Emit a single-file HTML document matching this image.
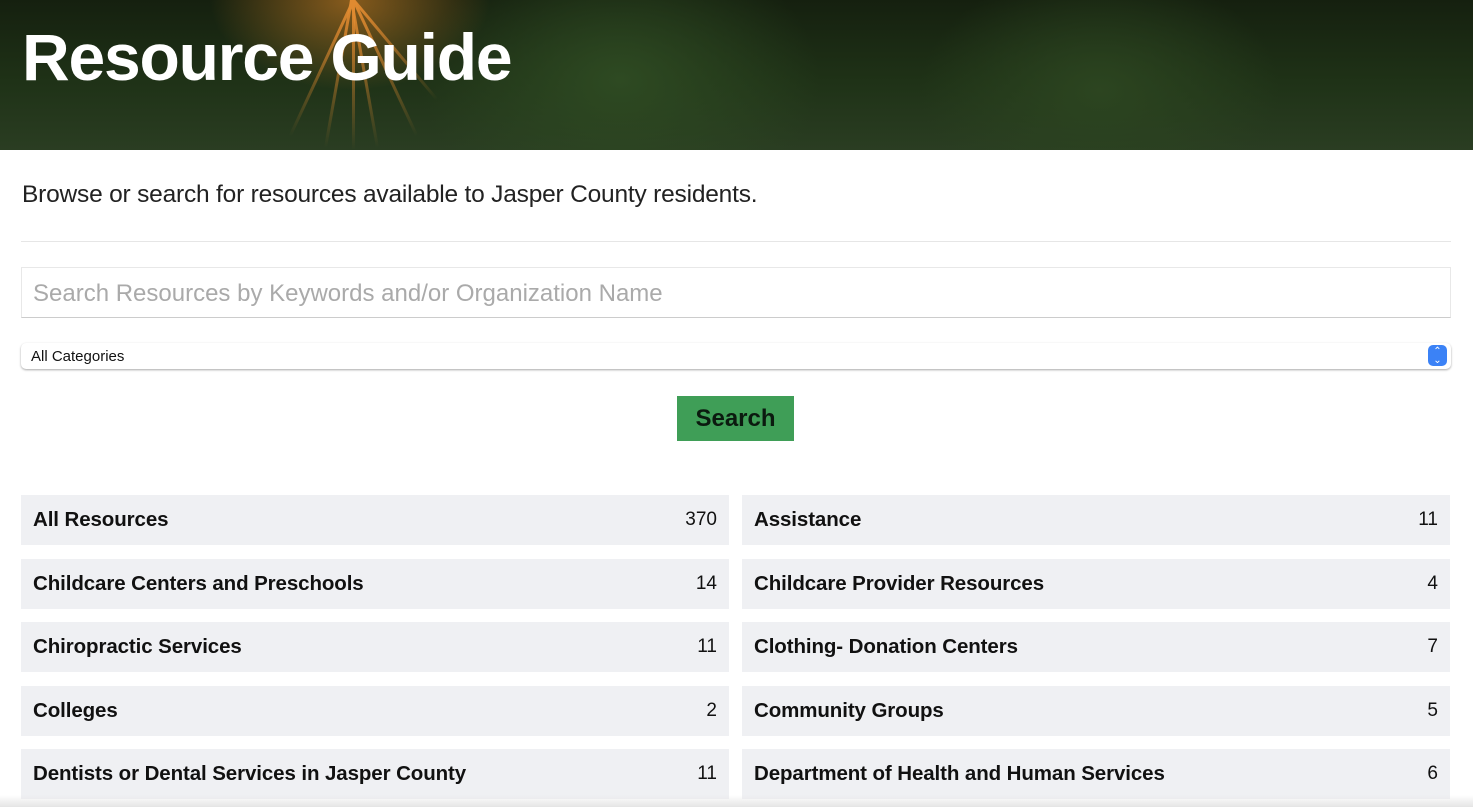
<!DOCTYPE html>
<html><head><style>
body{margin:0;width:1473px;height:807px;overflow:hidden;background:#fff;font-family:"Liberation Sans",sans-serif;position:relative}
.hero{position:absolute;left:0;top:0;width:1473px;height:150px;background:
radial-gradient(ellipse 140px 90px at 350px 0px,rgba(230,140,40,.55),transparent),
radial-gradient(ellipse 200px 140px at 620px 80px,#2e4a22,transparent),
radial-gradient(ellipse 180px 120px at 1100px 90px,#2c4520,transparent),
linear-gradient(180deg,#15200f 0%,#1f3217 55%,#2a3d22 100%);overflow:hidden}
.ray{position:absolute;top:0;width:3px;height:150px;background:linear-gradient(#e08a30,rgba(200,110,30,0));transform-origin:top}
.hero h1{position:absolute;left:22px;top:19px;margin:0;color:#fff;font-size:66px;font-weight:bold;letter-spacing:-1.2px}
.intro{position:absolute;left:22px;top:181px;font-size:24.5px;color:#222;letter-spacing:-.2px}
.hr{position:absolute;left:21px;top:241px;width:1430px;height:1px;background:#e6e6e6}
.input{position:absolute;left:21px;top:267px;height:51px;border:1px solid #e8e8e8;border-bottom-color:#ccc;font-size:24px;color:#aaa;line-height:52px;padding-left:11px;box-sizing:border-box;width:1430px}
.sel{position:absolute;left:21px;top:343px;width:1430px;height:26px;border-radius:5px;box-shadow:0 1px 2px rgba(0,0,0,.35);font-size:15px;line-height:28px;padding-left:10px;box-sizing:border-box;color:#111}
.sel i{position:absolute;right:4px;top:2px;width:19px;height:21px;background:#3b82f6;border-radius:5px;color:#fff;font-style:normal;font-size:10px;line-height:9px;text-align:center;padding-top:2px;box-sizing:border-box}
.btn{position:absolute;left:677px;top:396px;width:117px;height:45px;background:#3f9e57;color:#0b1a0f;font-weight:bold;font-size:24px;text-align:center;line-height:46px}
.row{position:absolute;height:50px;background:#eff0f3;box-sizing:border-box;padding:0 12px;display:flex;justify-content:space-between;align-items:center;font-size:20.5px;color:#111}
.row b{letter-spacing:-.1px}
.row span{font-size:19px}
.fade{position:absolute;left:0;top:795px;width:1473px;height:12px;background:linear-gradient(rgba(255,255,255,0),#e4e4e4)}
</style></head><body>
<div class="hero">
<div class="ray" style="left:350px;transform:rotate(10deg)"></div>
<div class="ray" style="left:350px;transform:rotate(-10deg)"></div>
<div class="ray" style="left:352px;transform:rotate(25deg)"></div>
<div class="ray" style="left:352px;transform:rotate(-25deg)"></div>
<div class="ray" style="left:352px;transform:rotate(0deg)"></div>
<div class="ray" style="left:352px;transform:rotate(-40deg);height:130px"></div>
<h1>Resource Guide</h1>
</div>
<div class="intro">Browse or search for resources available to Jasper County residents.</div>
<div class="hr"></div>
<div class="input">Search Resources by Keywords and/or Organization Name</div>
<div class="sel">All Categories<i>⌃<br>⌄</i></div>
<div class="btn">Search</div>
<div class="row" style="left:21px;top:495px;width:708px"><b>All Resources</b><span>370</span></div>
<div class="row" style="left:742px;top:495px;width:708px"><b>Assistance</b><span>11</span></div>
<div class="row" style="left:21px;top:559px;width:708px"><b>Childcare Centers and Preschools</b><span>14</span></div>
<div class="row" style="left:742px;top:559px;width:708px"><b>Childcare Provider Resources</b><span>4</span></div>
<div class="row" style="left:21px;top:622px;width:708px"><b>Chiropractic Services</b><span>11</span></div>
<div class="row" style="left:742px;top:622px;width:708px"><b>Clothing- Donation Centers</b><span>7</span></div>
<div class="row" style="left:21px;top:686px;width:708px"><b>Colleges</b><span>2</span></div>
<div class="row" style="left:742px;top:686px;width:708px"><b>Community Groups</b><span>5</span></div>
<div class="row" style="left:21px;top:749px;width:708px"><b>Dentists or Dental Services in Jasper County</b><span>11</span></div>
<div class="row" style="left:742px;top:749px;width:708px"><b>Department of Health and Human Services</b><span>6</span></div>
<div class="fade"></div>
</body></html>
